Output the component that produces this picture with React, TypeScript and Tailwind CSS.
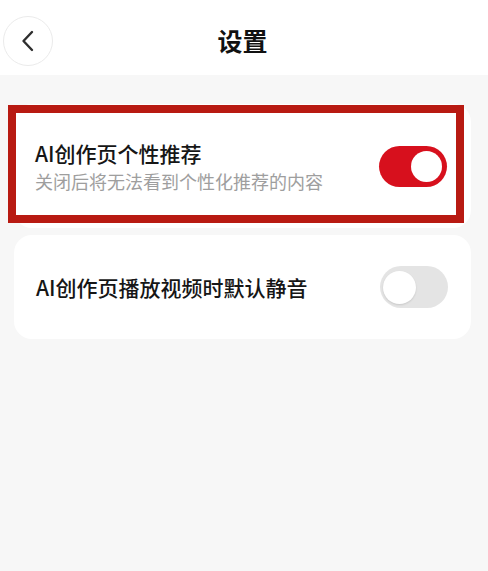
import React from 'react';

function Toggle({ on }: { on: boolean }) {
  return on ? (
    <div className="w-[68px] h-[41px] rounded-full bg-[#d7101d] flex items-center justify-end pr-[5px] shrink-0">
      <div className="w-[31px] h-[31px] rounded-full bg-white" />
    </div>
  ) : (
    <div className="w-[68px] h-[42px] rounded-full bg-[#e4e4e4] flex items-center justify-start pl-[3px] shrink-0">
      <div className="w-[33px] h-[33px] rounded-full bg-white shadow-[0_1px_2px_rgba(0,0,0,0.12)]" />
    </div>
  );
}

export default function App() {
  return (
    <div
      className="w-[488px] h-[571px] bg-[#f7f7f7] flex flex-col overflow-hidden"
      style={{ fontFamily: '"Noto Sans CJK SC", "Noto Sans", sans-serif' }}
    >
      {/* Header */}
      <header className="h-[75px] bg-white relative flex items-center justify-center shrink-0">
        <button className="absolute left-[3px] top-[16px] w-[50px] h-[50px] rounded-full border border-[#ebebeb] bg-white flex items-center justify-center">
          <svg width="16" height="22" viewBox="0 0 16 22" fill="none">
            <path d="M12 2 L3.5 11 L12 20" stroke="#2e2e2e" strokeWidth="2.4" strokeLinecap="round" strokeLinejoin="round" />
          </svg>
        </button>
        <h1 className="text-[25px] leading-none font-bold text-[#111] mt-[6px] -ml-[3px]">设置</h1>
      </header>

      {/* Settings list */}
      <main className="flex flex-col gap-[7px] pl-[14px] pr-[17px] pt-[29px]">
        <div className="relative h-[124px] bg-white rounded-[18px] flex items-center justify-between pl-[21px] pr-[24px]">
          <div className="flex flex-col">
            <span className="text-[21px] leading-[28px] font-medium text-[#161616]">AI创作页个性推荐</span>
            <span className="text-[18px] leading-[26px] text-[#9e9e9e] mt-[1px]">关闭后将无法看到个性化推荐的内容</span>
          </div>
          <Toggle on />
          {/* highlight frame */}
          <div className="absolute left-[-6px] top-[1px] w-[456px] h-[118px] border-[8px] border-[#b81a12] pointer-events-none" />
        </div>

        <div className="h-[104px] bg-white rounded-[18px] flex items-center justify-between pl-[22px] pr-[23px]">
          <span className="text-[21px] leading-[28px] font-medium text-[#161616]">AI创作页播放视频时默认静音</span>
          <Toggle on={false} />
        </div>
      </main>
    </div>
  );
}
